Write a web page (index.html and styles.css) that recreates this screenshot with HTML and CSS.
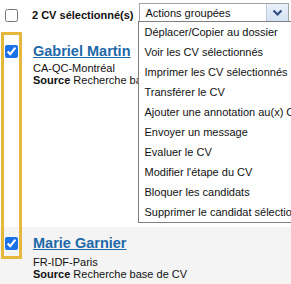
FILE: index.html
```html
<!DOCTYPE html>
<html lang="fr">
<head>
    <meta charset="UTF-8">
    <title>CV sélectionnés</title>
    <link rel="stylesheet" href="styles.css">
</head>
<body>
    <div class="toolbar">
        <input type="checkbox" class="check">
        <span class="count">2 CV sélectionné(s)</span>
        <div class="actions">
            <div class="select">
                <span class="select-label">Actions groupées</span>
                <span class="select-btn">
                    <svg width="11" height="8" viewBox="0 0 11 8">
                        <path d="M1.5 1.5 L5.5 5.5 L9.5 1.5" fill="none" stroke="#2f4f86" stroke-width="2.2"/>
                    </svg>
                </span>
            </div>
            <!-- Open dropdown list -->
            <ul class="menu">
                <li>Déplacer/Copier au dossier</li>
                <li>Voir les CV sélectionnés</li>
                <li>Imprimer les CV sélectionnés</li>
                <li>Transférer le CV</li>
                <li>Ajouter une annotation au(x) CV</li>
                <li>Envoyer un message</li>
                <li>Evaluer le CV</li>
                <li>Modifier l'étape du CV</li>
                <li>Bloquer les candidats</li>
                <li>Supprimer le candidat sélectionné</li>
            </ul>
        </div>
    </div>

    <div class="candidate">
        <input type="checkbox" class="check" checked>
        <div class="info">
            <a class="name" href="#">Gabriel Martin</a>
            <div class="line">CA-QC-Montréal</div>
            <div class="line"><b>Source</b> Recherche base de CV</div>
        </div>
    </div>

    <div class="candidate alt">
        <input type="checkbox" class="check" checked>
        <div class="info">
            <a class="name" href="#">Marie Garnier</a>
            <div class="line">FR-IDF-Paris</div>
            <div class="line"><b>Source</b> Recherche base de CV</div>
        </div>
    </div>

    <div class="highlight"></div>
</body>
</html>
```

FILE: styles.css
```css
/* Basic Reset */
* {
    box-sizing: border-box;
    margin: 0;
    padding: 0;
}

body {
    font-family: 'Liberation Sans', Arial, sans-serif;
    font-size: 11px;
    color: #111;
    background: #fff;
    width: 291px;
    height: 284px;
    overflow: hidden;
    position: relative;
}

.check {
    width: 13px;
    height: 13px;
    margin: 0;
    accent-color: #1a73e8;
    flex: none;
}

.toolbar {
    display: flex;
    align-items: flex-start;
    height: 35px;
    padding-left: 5px;
}

.toolbar .check {
    margin-top: 9px;
}

.count {
    font-weight: bold;
    margin-left: 14px;
    margin-top: 9px;
    white-space: nowrap;
}

.actions {
    position: relative;
    margin-left: 6px;
    margin-top: 3px;
}

.select {
    display: flex;
    align-items: center;
    width: 150px;
    height: 19px;
    border: 1px solid #a3a3a3;
    background: #fff;
    padding-left: 5px;
}

.select-label {
    flex: 1;
    white-space: nowrap;
}

.select-btn {
    display: flex;
    align-items: center;
    justify-content: center;
    width: 22px;
    height: 17px;
    border-left: 1px solid #b9cbe3;
    background: linear-gradient(#eaf1fa, #d3e1f2);
}

.menu {
    position: absolute;
    top: 18px;
    left: -1px;
    width: 170px;
    list-style: none;
    background: #fff;
    border: 1px solid #7f7f7f;
    z-index: 2;
}

.menu li {
    height: 20px;
    line-height: 20px;
    padding-left: 5px;
    white-space: nowrap;
    overflow: hidden;
}

.candidate {
    display: flex;
    align-items: flex-start;
    gap: 15px;
    padding: 7px 0 0 5px;
    height: 192px;
}

.candidate .check {
    margin-top: 3px;
}

.candidate.alt {
    background: #f4f4f4;
    height: 60px;
}

.info {
    white-space: nowrap;
}

.name {
    display: block;
    font-size: 14.5px;
    font-weight: bold;
    line-height: 19px;
    color: #1e69a8;
    text-decoration: underline;
    margin-bottom: 1px;
}

.line {
    line-height: 12px;
}

.alt .name {
    margin-bottom: 3px;
}

/* yellow annotation frame around the checkboxes */
.highlight {
    position: absolute;
    left: 1px;
    top: 32px;
    width: 21px;
    height: 227px;
    border: 3px solid #e6b73d;
    z-index: 3;
}
```
